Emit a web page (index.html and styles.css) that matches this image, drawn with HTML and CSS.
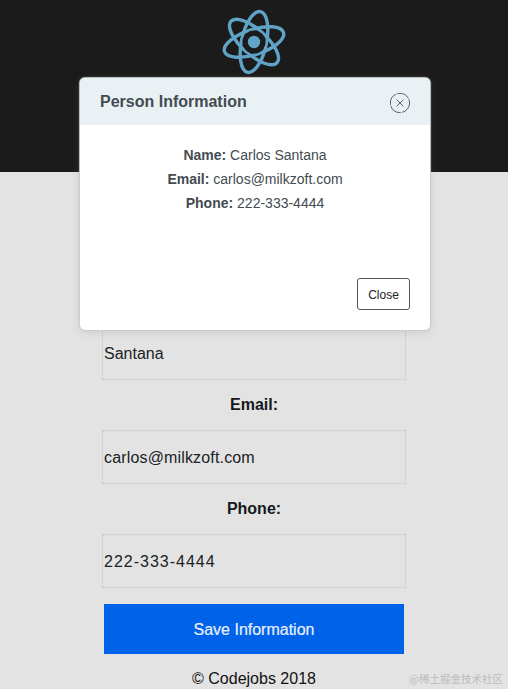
FILE: index.html
```html
<!DOCTYPE html>
<html lang="en">
<head>
<meta charset="utf-8">
<title>Person Information</title>
<link rel="stylesheet" href="styles.css">
</head>
<body>
<header class="top">
  <svg class="logo" width="70" height="72" viewBox="-35 -36 70 72" aria-hidden="true">
    <g fill="none" stroke="#5fa3c6" stroke-width="3.4">
      <ellipse rx="31" ry="12.5" transform="rotate(-18)"/>
      <ellipse rx="31" ry="12.5" transform="rotate(42)"/>
      <ellipse rx="31" ry="12.5" transform="rotate(102)"/>
    </g>
    <circle r="10" fill="none" stroke="#1b1b1b" stroke-width="3"/>
    <circle r="6.2" fill="#5fa3c6"/>
  </svg>
</header>
<form class="form">
  <label class="label">First Name:</label>
  <div class="field">Carlos</div>
  <label class="label">Last Name:</label>
  <div class="field">Santana</div>
  <label class="label">Email:</label>
  <div class="field field-email">carlos@milkzoft.com</div>
  <label class="label">Phone:</label>
  <div class="field field-phone">222-333-4444</div>
  <button class="save" type="button">Save Information</button>
</form>
<footer class="foot">© Codejobs 2018</footer>
<div class="modal">
  <div class="modal-head">
    <h2 class="modal-title">Person Information</h2>
    <svg class="modal-x" width="22" height="22" viewBox="0 0 22 22" aria-hidden="true">
      <circle cx="11" cy="11" r="9.6" fill="none" stroke="#4a5258" stroke-width="0.9" stroke-dasharray="13 1"/>
      <path d="M7.6 7.6 14.4 14.4M14.4 7.6 7.6 14.4" fill="none" stroke="#4a5258" stroke-width="0.9"/>
    </svg>
  </div>
  <div class="modal-body">
    <p class="line"><b>Name:</b> Carlos Santana</p>
    <p class="line"><b>Email:</b> carlos@milkzoft.com</p>
    <p class="line"><b>Phone:</b> 222-333-4444</p>
  </div>
  <div class="modal-foot">
    <button class="close" type="button">Close</button>
  </div>
</div>
<div class="mark">@稀土掘金技术社区</div>
</body>
</html>
```
FILE: styles.css
```css
* { box-sizing: border-box; }
html, body { height: 100%; }
body {
  margin: 0;
  height: 689px;
  overflow: hidden;
  background: #e3e3e3;
  color: #16191c;
  font-family: "Liberation Sans", Arial, sans-serif;
  font-size: 16px;
}
.top {
  height: 172px;
  background: #1b1b1b;
  display: flex;
  justify-content: center;
  padding-top: 6px;
}
.logo { display: block; }
.form {
  width: 304px;
  margin: 0 0 0 102px;
  display: flex;
  flex-direction: column;
  align-items: stretch;
}
.label {
  height: 50px;
  line-height: 50px;
  text-align: center;
  font-weight: 700;
}
.field {
  height: 54px;
  line-height: 54px;
  padding-left: 1px;
  border: 1px dotted #c2c2c2;
  color: #1a2226;
}
.field-email { letter-spacing: 0.16px; }
.field-phone { letter-spacing: 1px; }
.save {
  width: 300px;
  height: 50px;
  margin: 16px 0 0 2px;
  padding: 2px 0 0;
  border: 0;
  background: #0062e8;
  color: #e8f1ff;
  font: 16px "Liberation Sans", Arial, sans-serif;
  -webkit-text-stroke: 0.2px #e8f1ff;
}
.foot {
  margin-top: 14px;
  line-height: 22px;
  text-align: center;
  color: #111;
}
.modal {
  position: absolute;
  left: 80px;
  top: 78px;
  width: 350px;
  height: 252px;
  background: #fff;
  border-radius: 5px;
  box-shadow: 0 0 1px 1px #c8cacc, 0 2px 10px rgba(120, 120, 120, 0.22);
  display: flex;
  flex-direction: column;
  overflow: hidden;
}
.modal-head {
  height: 47px;
  flex: none;
  background: #e9f1f5;
  padding: 0 19px 0 20px;
  display: flex;
  align-items: center;
  justify-content: space-between;
}
.modal-title {
  margin: 1px 0 0;
  font-size: 16px;
  font-weight: 700;
  color: #434b50;
}
.modal-x { display: block; margin-top: 3px; }
.modal-body {
  flex: 1;
  padding-top: 18px;
  text-align: center;
  font-size: 14px;
  color: #434b50;
}
.line { margin: 0; line-height: 24px; }
.modal-foot {
  display: flex;
  justify-content: flex-end;
  padding: 0 20px 20px;
}
.close {
  width: 53px;
  height: 32px;
  padding: 1px 0 0;
  background: #fff;
  border: 1px solid #555;
  border-radius: 3px;
  color: #222;
  font: 12px "Liberation Sans", Arial, sans-serif;
}
.mark {
  position: absolute;
  right: 5px;
  bottom: 3px;
  font: 10.5px "Noto Sans CJK SC", sans-serif;
  color: #bcbcbc;
}
```
